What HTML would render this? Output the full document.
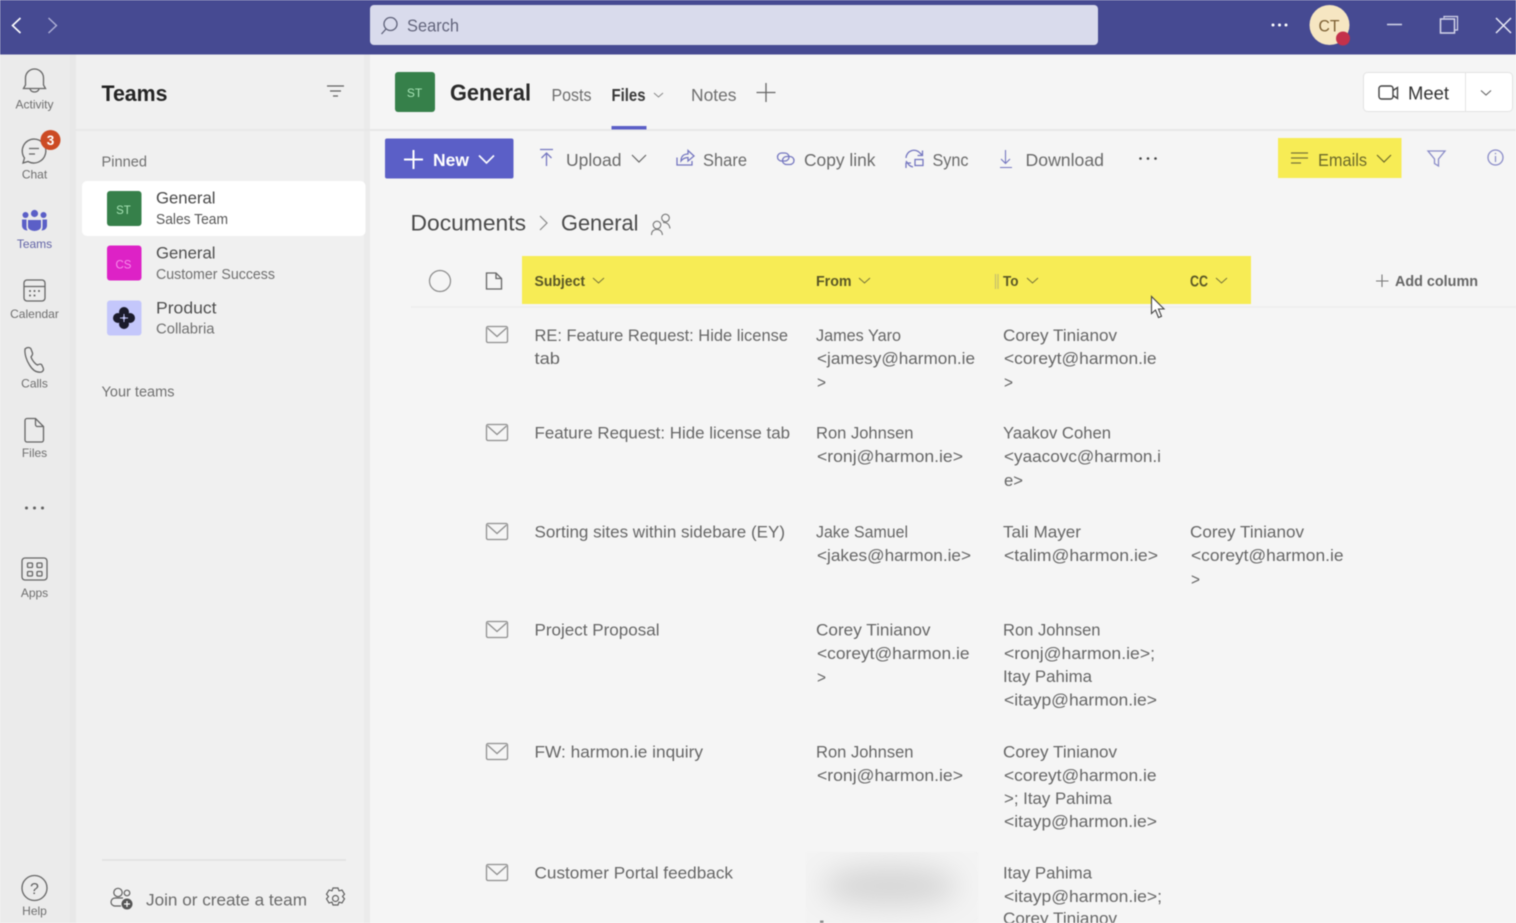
<!DOCTYPE html>
<html><head><meta charset="utf-8"><title>Teams</title>
<style>
html,body{margin:0;padding:0;width:1516px;height:923px;overflow:hidden;background:#f5f5f5}
svg{display:block;font-family:"Liberation Sans",sans-serif;filter:blur(.4px)}
text{white-space:pre}
.r{font-size:17px;fill:#666}
.rl{font-size:12px;fill:#6e6e6e;text-anchor:middle}
.tb{font-size:17.5px;fill:#6a6a6a}
.ic{fill:none;stroke:#666;stroke-width:1.300}
.pi{fill:none;stroke:#7577c0;stroke-width:1.300}
.mail{fill:none;stroke:#8f8f8f;stroke-width:1.300}
</style></head><body>
<svg width="1516" height="923" viewBox="0 0 1516 923" xmlns="http://www.w3.org/2000/svg">
<!-- backgrounds -->
<rect width="1516" height="923" fill="#f5f5f5"/>
<rect x="0" y="54" width="76" height="869" fill="#ebebeb"/>
<rect x="76" y="54" width="294" height="869" fill="#f0f0f0"/>
<rect x="70" y="54" width="6" height="869" fill="#e8e8e8"/>
<rect x="364" y="54" width="6" height="869" fill="#ebebeb"/>
<rect x="76" y="129" width="1440" height="2" fill="#e8e8e8"/>
<!-- title bar -->
<rect width="1516" height="54.500" fill="#464a92"/>
<path d="M20.500 18l-8 7.500 8 7.500" fill="none" stroke="#fff" stroke-width="1.600"/>
<path d="M48.500 18l8 7.500-8 7.500" fill="none" stroke="#aeb0d6" stroke-width="1.400"/>
<rect x="370" y="5" width="728" height="40" rx="4" fill="#d9dbec"/>
<circle cx="390.500" cy="24" r="6.500" fill="none" stroke="#5d6078" stroke-width="1.300"/><path d="M386 29l-4.500 5" stroke="#5d6078" stroke-width="1.300"/>
<text x="407" y="31.500" font-size="17.500" fill="#63657c" textLength="52" lengthAdjust="spacingAndGlyphs">Search</text>
<g fill="#fff"><circle cx="1273" cy="25" r="1.500"/><circle cx="1279.500" cy="25" r="1.500"/><circle cx="1286" cy="25" r="1.500"/></g>
<circle cx="1329.500" cy="25" r="20" fill="#f6e6c2"/>
<text x="1318.500" y="31.500" font-size="17" fill="#7d6034" textLength="21" lengthAdjust="spacingAndGlyphs">CT</text>
<circle cx="1343" cy="38.500" r="7" fill="#c4314b"/>
<path d="M1387 24.500h15" stroke="#d5d6ea" stroke-width="1.500"/>
<rect x="1440.500" y="19" width="14" height="14" fill="none" stroke="#d5d6ea" stroke-width="1.500"/><path d="M1444 18v-1.500h13.500v13.500h-3" fill="none" stroke="#d5d6ea" stroke-width="1.200"/>
<path d="M1496 18l15 15M1511 18l-15 15" stroke="#e8e8f4" stroke-width="1.500"/>
<!-- rail -->
<path d="M25.500 85v-7a9 9 0 0 1 18 0v7l2 3.500h-22zM30 88.500a4.500 3.500 0 0 0 9 0" class="ic"/>
<text class="rl" x="34.500" y="108.500">Activity</text>
<path d="M34 139a12 12 0 1 1-6 22.500l-5 1.500 1.500-5A12 12 0 0 1 34 139zM29 148.500h10M29 154h6" class="ic"/>
<text class="rl" x="34.500" y="178.500">Chat</text>
<circle cx="50.500" cy="140" r="10" fill="#cc4a23"/>
<text x="50.500" y="145" font-size="13.500" font-weight="bold" fill="#fff" text-anchor="middle">3</text>
<g fill="#5b5fc7"><circle cx="34.500" cy="213.500" r="3.600"/><circle cx="25.500" cy="215" r="3"/><circle cx="43.500" cy="215" r="3"/><path d="M28 220h13v6.500a6.500 4.500 0 0 1-13 0z"/><path d="M22 219.500h4.500v8.500l1 2.500c-3 0-5.500-2-5.500-5zM47 219.500h-4.500v8.500l-1 2.500c3 0 5.500-2 5.500-5z"/></g>
<text class="rl" x="34.500" y="248" style="fill:#6264a7">Teams</text>
<rect x="24" y="280" width="21" height="21" rx="3" class="ic"/><path d="M24 286.500h21" class="ic"/><g fill="#616161"><circle cx="30" cy="291" r="1"/><circle cx="34.500" cy="291" r="1"/><circle cx="39" cy="291" r="1"/><circle cx="30" cy="295.500" r="1"/><circle cx="34.500" cy="295.500" r="1"/></g>
<text class="rl" x="34.500" y="318">Calendar</text>
<path d="M25 349c2-2 5-2 6 0l1.500 4c.5 2-1 3-1.500 4 1 3 4 7 6.500 8 1-.5 2.500-1.500 4-.5l1.500 3c1 2 .5 3.500-1.500 4.500-5 1-9-2-12-7-3-4.500-5-11-4.500-15.500z" class="ic"/>
<text class="rl" x="34.500" y="387.500">Calls</text>
<path d="M25 420.500a2 2 0 0 1 2-2h8.500l8 8v13.500a2 2 0 0 1-2 2H27a2 2 0 0 1-2-2zM35.500 418.500v6a2 2 0 0 0 2 2h6" class="ic"/>
<text class="rl" x="34.500" y="457">Files</text>
<g fill="#616161"><circle cx="26.500" cy="508" r="1.500"/><circle cx="34.500" cy="508" r="1.500"/><circle cx="42.500" cy="508" r="1.500"/></g>
<rect x="22" y="558" width="25" height="22" rx="3" class="ic"/>
<rect x="27.500" y="563" width="5" height="4.500" rx="1" class="ic"/><rect x="37" y="563" width="5" height="4.500" rx="1" class="ic"/><rect x="27.500" y="571.500" width="5" height="4.500" rx="1" class="ic"/><rect x="37" y="571.500" width="5" height="4.500" rx="1" class="ic"/>
<text class="rl" x="34.500" y="597">Apps</text>
<circle cx="34.500" cy="888" r="12.500" class="ic"/>
<text x="34.500" y="894" font-size="16" fill="#616161" text-anchor="middle">?</text>
<text class="rl" x="34.500" y="915">Help</text>
<!-- teams panel -->
<text x="101.500" y="101" font-size="22" font-weight="bold" fill="#242424" textLength="66" lengthAdjust="spacingAndGlyphs">Teams</text>
<path d="M327 86h17M330 91h11M333 96h5" stroke="#616161" stroke-width="1.200"/>
<text x="101.500" y="166.500" font-size="14.500" fill="#707070" textLength="45.500" lengthAdjust="spacingAndGlyphs">Pinned</text>
<rect x="82" y="181" width="283.500" height="55" rx="5" fill="#fff"/>
<rect x="107" y="191" width="34.500" height="35" rx="3" fill="#36804a"/>
<text x="123.500" y="214" font-size="11.500" fill="#a6e3b4" text-anchor="middle">ST</text>
<text x="156" y="203.500" font-size="17" fill="#4a4a4a" textLength="59.500" lengthAdjust="spacingAndGlyphs">General</text>
<text x="156" y="224" font-size="14.500" fill="#585858" textLength="72" lengthAdjust="spacingAndGlyphs">Sales Team</text>
<rect x="107" y="245.500" width="34.500" height="35" rx="3" fill="#dd22c6"/>
<text x="123.500" y="268.500" font-size="11.500" fill="#f78ceb" text-anchor="middle">CS</text>
<text x="156" y="258.500" font-size="17" fill="#4f4f4f" textLength="59.500" lengthAdjust="spacingAndGlyphs">General</text>
<text x="156" y="279" font-size="14.500" fill="#707070" textLength="119" lengthAdjust="spacingAndGlyphs">Customer Success</text>
<rect x="107" y="300.500" width="34.500" height="35" rx="3" fill="#c4c7fb"/>
<g fill="#1b1b2b"><circle cx="124" cy="312" r="5"/><circle cx="124" cy="324" r="5"/><circle cx="118" cy="318" r="5"/><circle cx="130" cy="318" r="5"/></g>
<path d="M124 314v8M120 318h8" stroke="#c4c7fb" stroke-width="1"/>
<text x="156" y="313.500" font-size="17" fill="#4f4f4f" textLength="60.500" lengthAdjust="spacingAndGlyphs">Product</text>
<text x="156" y="333.500" font-size="14.500" fill="#707070" textLength="58.500" lengthAdjust="spacingAndGlyphs">Collabria</text>
<text x="101.500" y="396.500" font-size="14.500" fill="#707070" textLength="73" lengthAdjust="spacingAndGlyphs">Your teams</text>
<rect x="102" y="859" width="244" height="2" fill="#e3e3e3"/>
<circle cx="118" cy="892.500" r="4.200" fill="none" stroke="#616161" stroke-width="1.200"/><circle cx="127" cy="893" r="2.800" fill="none" stroke="#616161" stroke-width="1.200"/>
<path d="M121 906h-6a4 4 0 0 1 0-8h8" fill="none" stroke="#616161" stroke-width="1.200"/>
<circle cx="127" cy="904" r="5.500" fill="#555"/><path d="M124 904h6M127 901v6" stroke="#fff" stroke-width="1.200"/>
<text x="146" y="905.500" font-size="17" fill="#6a6a6a" textLength="161" lengthAdjust="spacingAndGlyphs">Join or create a team</text>
<path d="M333 888h5l1 2.800 3-.7 2.500 4.100-2 2.300 2 2.300-2.500 4.100-3-.7-1 2.800h-5l-1-2.800-3 .7-2.500-4.100 2-2.300-2-2.300 2.500-4.100 3 .7z" fill="none" stroke="#616161" stroke-width="1.200"/><circle cx="335.500" cy="898.500" r="3" fill="none" stroke="#616161" stroke-width="1.200"/>
<!-- channel header -->
<rect x="395" y="72" width="40" height="40" rx="3" fill="#36804a"/>
<text x="414.500" y="97" font-size="12" fill="#a6e3b4" text-anchor="middle">ST</text>
<text x="450" y="100.500" font-size="23" font-weight="bold" fill="#2b2b2b" textLength="81" lengthAdjust="spacingAndGlyphs">General</text>
<text x="551.500" y="101" font-size="17.500" fill="#6e6e6e" textLength="40" lengthAdjust="spacingAndGlyphs">Posts</text>
<text x="611.500" y="101" font-size="17.500" font-weight="bold" fill="#3a3a3a" textLength="34" lengthAdjust="spacingAndGlyphs">Files</text>
<path d="M654 93l4.500 4 4.500-4" fill="none" stroke="#888" stroke-width="1"/>
<rect x="611.500" y="126" width="35" height="3.500" fill="#5b5fc7"/>
<text x="691" y="101" font-size="17.500" fill="#6e6e6e" textLength="45.500" lengthAdjust="spacingAndGlyphs">Notes</text>
<path d="M766 83v19M756.500 92.500h19" stroke="#666" stroke-width="1.300"/>
<rect x="1363.500" y="72.500" width="149" height="39" rx="4" fill="#fff" stroke="#e3e3e3"/>
<path d="M1465.500 73v38" stroke="#e3e3e3"/>
<rect x="1379" y="86" width="14" height="13" rx="2.500" fill="none" stroke="#424242" stroke-width="1.400"/><path d="M1393 90.500l4.500-3v11l-4.500-3" fill="none" stroke="#424242" stroke-width="1.400"/>
<text x="1408" y="99.500" font-size="18" fill="#333" textLength="41" lengthAdjust="spacingAndGlyphs">Meet</text>
<path d="M1481 90.500l5 4.500 5-4.500" fill="none" stroke="#666" stroke-width="1.100"/>
<!-- toolbar -->
<rect x="385" y="138.500" width="128.500" height="40" rx="2" fill="#5b5fc7"/>
<path d="M413.500 150v19M404 159.500h19" stroke="#fff" stroke-width="2"/>
<text x="433" y="166" font-size="17.500" font-weight="bold" fill="#fff" textLength="36" lengthAdjust="spacingAndGlyphs">New</text>
<path d="M479 155.500l7.500 7.500 7.500-7.500" fill="none" stroke="#fff" stroke-width="1.600"/>
<path d="M540 149.500h13M546.500 166v-13M541.500 158l5-5 5 5" class="pi"/>
<text class="tb" x="566" y="166" textLength="55.500" lengthAdjust="spacingAndGlyphs">Upload</text>
<path d="M632 155l7 7 7-7" fill="none" stroke="#666" stroke-width="1.200"/>
<path d="M677 157.500v7.500h15v-4M681 161c0-5 3-7 7-7v-3.500l6 5.500-6 5v-3.500c-3 0-5 1-7 3.500z" class="pi"/>
<text class="tb" x="703" y="166" textLength="44" lengthAdjust="spacingAndGlyphs">Share</text>
<rect x="777.500" y="153" width="11.500" height="8" rx="4" class="pi"/><rect x="782.500" y="156.500" width="11.500" height="8" rx="4" class="pi"/>
<text class="tb" x="804" y="166" textLength="71.500" lengthAdjust="spacingAndGlyphs">Copy link</text>
<path d="M906 158a8 8 0 0 1 14-5l2.500 2.500M922.500 150.500v5h-5M906 161l3 4a8 8 0 0 0 4 2M906 168v-5h5" class="pi"/>
<rect x="915" y="159.500" width="8" height="6" fill="none" stroke="#7577c0" stroke-width="1.300"/>
<text class="tb" x="932.500" y="166" textLength="36" lengthAdjust="spacingAndGlyphs">Sync</text>
<path d="M1005.500 150v13M1001 159l4.500 4.500 4.500-4.500M1000 167.500h12" class="pi" style="stroke-width:1.100"/>
<text class="tb" x="1025.500" y="166" textLength="78.500" lengthAdjust="spacingAndGlyphs">Download</text>
<g fill="#444"><circle cx="1140.500" cy="158.500" r="1.300"/><circle cx="1148" cy="158.500" r="1.300"/><circle cx="1155.500" cy="158.500" r="1.300"/></g>
<rect x="1278" y="138" width="123.500" height="40" fill="#f7ec55"/>
<path d="M1291 153h17M1291 158h17M1291 163h10" stroke="#77743a" stroke-width="1.200"/>
<text x="1318" y="166" font-size="17.500" fill="#6d6a2a" textLength="49" lengthAdjust="spacingAndGlyphs">Emails</text>
<path d="M1377 155l7 7 7-7" fill="none" stroke="#6d6a2a" stroke-width="1.200"/>
<path d="M1428 151h17l-6.500 8v7l-4-2.500v-4.500z" class="pi" style="stroke:#8a8cc8"/>
<circle cx="1495.500" cy="157.500" r="7.500" class="pi" style="stroke:#8a8cc8"/><path d="M1495.500 156v6" stroke="#8a8cc8" stroke-width="1.200"/><circle cx="1495.500" cy="153.500" r=".8" fill="#8a8cc8"/>
<!-- breadcrumb -->
<text x="410.500" y="230.500" font-size="22.500" fill="#4a4a4a" textLength="115.500" lengthAdjust="spacingAndGlyphs">Documents</text>
<path d="M540 216l7 7-7 7" fill="none" stroke="#888" stroke-width="1.200"/>
<text x="561" y="230.500" font-size="22.500" fill="#4a4a4a" textLength="77.500" lengthAdjust="spacingAndGlyphs">General</text>
<circle cx="665.500" cy="218" r="3.800" fill="none" stroke="#777" stroke-width="1.100"/><circle cx="657" cy="225" r="3.800" fill="none" stroke="#777" stroke-width="1.100"/><path d="M651.500 235c0-3.500 2-5.500 5.500-5.500s5 2 5.500 5.500M663 222.500c4 0 6.500 2 7 6" fill="none" stroke="#777" stroke-width="1.100"/>
<!-- column header -->
<rect x="411" y="306" width="1105" height="2" fill="#eeeeee"/>
<circle cx="440" cy="281" r="10.500" fill="none" stroke="#8a8a8a" stroke-width="1.200"/>
<path d="M486.500 273h9.500l5.500 5.500V289h-15zM496 273v5.500h5.500" fill="none" stroke="#666" stroke-width="1.300"/>
<rect x="522" y="256" width="729" height="48" fill="#f7ec55"/>
<g font-size="14.500" font-weight="bold" fill="#5a5726">
<text x="534.500" y="286" textLength="50.500" lengthAdjust="spacingAndGlyphs">Subject</text>
<text x="816" y="286" textLength="35.500" lengthAdjust="spacingAndGlyphs">From</text>
<text x="1003" y="286" textLength="15.500" lengthAdjust="spacingAndGlyphs">To</text>
<text x="1190" y="286.500" font-size="15.500" textLength="18" lengthAdjust="spacingAndGlyphs">CC</text>
</g>
<g fill="none" stroke="#77743a" stroke-width="1"><path d="M593 278l5.500 5 5.500-5M859 278l5.500 5 5.500-5M1027 278l5.500 5 5.500-5M1216 278l5.500 5 5.500-5"/></g>
<path d="M995.500 274v15M998 274v15" stroke="#c9c26a" stroke-width="1.300"/>
<path d="M1382 274.500v12.500M1376 281h12.500" stroke="#777" stroke-width="1.100"/>
<text x="1395" y="286" font-size="14.500" font-weight="bold" fill="#666" textLength="83" lengthAdjust="spacingAndGlyphs">Add column</text>
<!-- rows -->
<g>
<rect x="486.500" y="326.500" width="21" height="16" rx="1.500" class="mail"/><path class="mail" d="M487.500 328l9.500 8.500 9.500-8.500"/>
<rect x="486.500" y="424.500" width="21" height="16" rx="1.500" class="mail"/><path class="mail" d="M487.500 426l9.500 8.500 9.500-8.500"/>
<rect x="486.500" y="523.500" width="21" height="16" rx="1.500" class="mail"/><path class="mail" d="M487.500 525l9.500 8.500 9.500-8.500"/>
<rect x="486.500" y="621.500" width="21" height="16" rx="1.500" class="mail"/><path class="mail" d="M487.500 623l9.500 8.500 9.500-8.500"/>
<rect x="486.500" y="743.500" width="21" height="16" rx="1.500" class="mail"/><path class="mail" d="M487.500 745l9.500 8.500 9.500-8.500"/>
<rect x="486.500" y="864.500" width="21" height="16" rx="1.500" class="mail"/><path class="mail" d="M487.500 866l9.500 8.500 9.500-8.500"/>
</g>
<text class="r" x="534.500" y="341" textLength="253.500" lengthAdjust="spacingAndGlyphs">RE: Feature Request: Hide license</text>
<text class="r" x="534.500" y="364" textLength="25.500" lengthAdjust="spacingAndGlyphs">tab</text>
<text class="r" x="816" y="341" textLength="85" lengthAdjust="spacingAndGlyphs">James Yaro</text>
<text class="r" x="817" y="364" textLength="158" lengthAdjust="spacingAndGlyphs">&lt;jamesy@harmon.ie</text>
<text class="r" x="817" y="388" textLength="9" lengthAdjust="spacingAndGlyphs">&gt;</text>
<text class="r" x="1003" y="341" textLength="114" lengthAdjust="spacingAndGlyphs">Corey Tinianov</text>
<text class="r" x="1004" y="364" textLength="152.500" lengthAdjust="spacingAndGlyphs">&lt;coreyt@harmon.ie</text>
<text class="r" x="1004" y="388" textLength="9" lengthAdjust="spacingAndGlyphs">&gt;</text>
<text class="r" x="534.500" y="438.500" textLength="255.500" lengthAdjust="spacingAndGlyphs">Feature Request: Hide license tab</text>
<text class="r" x="816" y="438.500" textLength="97.500" lengthAdjust="spacingAndGlyphs">Ron Johnsen</text>
<text class="r" x="817" y="462" textLength="146" lengthAdjust="spacingAndGlyphs">&lt;ronj@harmon.ie&gt;</text>
<text class="r" x="1003" y="438.500" textLength="108" lengthAdjust="spacingAndGlyphs">Yaakov Cohen</text>
<text class="r" x="1004" y="462" textLength="157" lengthAdjust="spacingAndGlyphs">&lt;yaacovc@harmon.i</text>
<text class="r" x="1004" y="486" textLength="19" lengthAdjust="spacingAndGlyphs">e&gt;</text>
<text class="r" x="534.500" y="537.500" textLength="250.500" lengthAdjust="spacingAndGlyphs">Sorting sites within sidebare (EY)</text>
<text class="r" x="816" y="537.500" textLength="92" lengthAdjust="spacingAndGlyphs">Jake Samuel</text>
<text class="r" x="817" y="561" textLength="154" lengthAdjust="spacingAndGlyphs">&lt;jakes@harmon.ie&gt;</text>
<text class="r" x="1003" y="537.500" textLength="78" lengthAdjust="spacingAndGlyphs">Tali Mayer</text>
<text class="r" x="1004" y="561" textLength="154" lengthAdjust="spacingAndGlyphs">&lt;talim@harmon.ie&gt;</text>
<text class="r" x="1190" y="537.500" textLength="114" lengthAdjust="spacingAndGlyphs">Corey Tinianov</text>
<text class="r" x="1191" y="561" textLength="152.500" lengthAdjust="spacingAndGlyphs">&lt;coreyt@harmon.ie</text>
<text class="r" x="1191" y="585" textLength="9" lengthAdjust="spacingAndGlyphs">&gt;</text>
<text class="r" x="534.500" y="635.500" textLength="125" lengthAdjust="spacingAndGlyphs">Project Proposal</text>
<text class="r" x="816" y="635.500" textLength="114.500" lengthAdjust="spacingAndGlyphs">Corey Tinianov</text>
<text class="r" x="817" y="659" textLength="152.500" lengthAdjust="spacingAndGlyphs">&lt;coreyt@harmon.ie</text>
<text class="r" x="817" y="683" textLength="9" lengthAdjust="spacingAndGlyphs">&gt;</text>
<text class="r" x="1003" y="635.500" textLength="97.500" lengthAdjust="spacingAndGlyphs">Ron Johnsen</text>
<text class="r" x="1004" y="659" textLength="151" lengthAdjust="spacingAndGlyphs">&lt;ronj@harmon.ie&gt;;</text>
<text class="r" x="1003" y="682" textLength="89" lengthAdjust="spacingAndGlyphs">Itay Pahima</text>
<text class="r" x="1004" y="705.500" textLength="153" lengthAdjust="spacingAndGlyphs">&lt;itayp@harmon.ie&gt;</text>
<text class="r" x="534.500" y="757.500" textLength="168.500" lengthAdjust="spacingAndGlyphs">FW: harmon.ie inquiry</text>
<text class="r" x="816" y="757.500" textLength="97.500" lengthAdjust="spacingAndGlyphs">Ron Johnsen</text>
<text class="r" x="817" y="781" textLength="146" lengthAdjust="spacingAndGlyphs">&lt;ronj@harmon.ie&gt;</text>
<text class="r" x="1003" y="757.500" textLength="114" lengthAdjust="spacingAndGlyphs">Corey Tinianov</text>
<text class="r" x="1004" y="781" textLength="152.500" lengthAdjust="spacingAndGlyphs">&lt;coreyt@harmon.ie</text>
<text class="r" x="1004" y="804" textLength="108" lengthAdjust="spacingAndGlyphs">&gt;; Itay Pahima</text>
<text class="r" x="1004" y="827" textLength="153" lengthAdjust="spacingAndGlyphs">&lt;itayp@harmon.ie&gt;</text>
<text class="r" x="534.500" y="878.500" textLength="198.500" lengthAdjust="spacingAndGlyphs">Customer Portal feedback</text>
<text class="r" x="1003" y="878.500" textLength="89" lengthAdjust="spacingAndGlyphs">Itay Pahima</text>
<text class="r" x="1004" y="902" textLength="158" lengthAdjust="spacingAndGlyphs">&lt;itayp@harmon.ie&gt;;</text>
<text class="r" x="1003" y="924" textLength="114" lengthAdjust="spacingAndGlyphs">Corey Tinianov</text>
<!-- blurred region -->
<defs><filter id="bl" x="-50%" y="-100%" width="200%" height="300%"><feGaussianBlur stdDeviation="14"/></filter>
<clipPath id="bc"><rect x="806" y="852" width="172" height="71"/></clipPath></defs>
<g clip-path="url(#bc)"><rect x="806" y="852" width="172" height="71" fill="#f3f3f3"/><ellipse cx="890" cy="886" rx="68" ry="20" fill="#d6d6d6" filter="url(#bl)"/></g>
<rect x="820" y="920.500" width="3.500" height="2.500" fill="#8a8a8a"/>
<!-- cursor -->
<path d="M1151.500 296.500v17l4-3.500 3 7.500 3-1.200-3-7.300h5.500z" fill="#fff" stroke="#444" stroke-width="1.100"/>
</svg>
</body></html>
